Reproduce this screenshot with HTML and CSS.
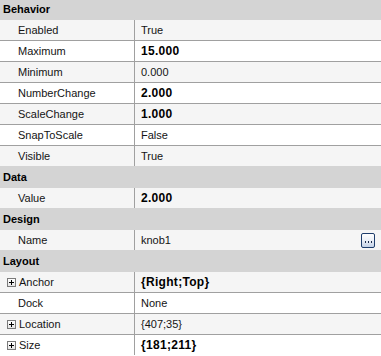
FILE: index.html
```html
<!DOCTYPE html>
<html>
<head>
<meta charset="utf-8">
<link rel="stylesheet" href="styles.css">
</head>
<body>
<div class="grid">
  <div class="cat first">Behavior</div>
  <div class="rows">
    <div class="row light"><div class="name">Enabled</div><div class="val">True</div></div>
    <div class="row"><div class="name">Maximum</div><div class="val bold">15.000</div></div>
    <div class="row light"><div class="name">Minimum</div><div class="val">0.000</div></div>
    <div class="row"><div class="name">NumberChange</div><div class="val bold">2.000</div></div>
    <div class="row light"><div class="name">ScaleChange</div><div class="val bold">1.000</div></div>
    <div class="row"><div class="name">SnapToScale</div><div class="val">False</div></div>
    <div class="row light"><div class="name">Visible</div><div class="val">True</div></div>
  </div>
  <div class="cat">Data</div>
  <div class="rows">
    <div class="row light"><div class="name">Value</div><div class="val bold">2.000</div></div>
  </div>
  <div class="cat">Design</div>
  <div class="rows">
    <div class="row light"><div class="name">Name</div><div class="val">knob1<span class="dots"><i></i><i></i><i></i></span></div></div>
  </div>
  <div class="cat">Layout</div>
  <div class="rows">
    <div class="row light"><div class="name exp"><span class="plus"></span>Anchor</div><div class="val bold">{Right;Top}</div></div>
    <div class="row"><div class="name">Dock</div><div class="val">None</div></div>
    <div class="row light"><div class="name exp"><span class="plus"></span>Location</div><div class="val">{407;35}</div></div>
    <div class="row"><div class="name exp"><span class="plus"></span>Size</div><div class="val bold">{181;211}</div></div>
  </div>
</div>
</body>
</html>
```
FILE: styles.css
```css
html, body {
  margin: 0;
  padding: 0;
  background: #ffffff;
}
body {
  overflow: hidden;
  font-family: "Liberation Sans", Arial, sans-serif;
  font-size: 11px;
  color: #141414;
}
.grid {
  width: 381px;
  display: flex;
  flex-direction: column;
}
.cat {
  height: 22px;
  line-height: 22px;
  background: #d4d4d4;
  font-weight: bold;
  padding-left: 3px;
  color: #000;
}
.cat.first {
  margin-top: -2px;
}
.rows {
  display: flex;
  flex-direction: column;
}
.row {
  display: flex;
  height: 20px;
  line-height: 21px;
  background: #ffffff;
}
.row.light {
  background: #f5f5f5;
}
.row + .row {
  border-top: 1px solid #a0a0a0;
}
.name {
  width: 116px;
  padding-left: 18px;
  border-right: 1px solid #a0a0a0;
  white-space: nowrap;
  display: flex;
  align-items: center;
}
.name.exp {
  padding-left: 7px;
  width: 127px;
}
.plus {
  width: 7px;
  height: 7px;
  border: 1px solid #7a7a7a;
  background: linear-gradient(#ffffff, #e4e4e4);
  margin-right: 3px;
  margin-top: 0px;
  position: relative;
  flex: none;
}
.plus::before {
  content: "";
  position: absolute;
  left: 1px;
  top: 3px;
  width: 5px;
  height: 1px;
  background: #000;
}
.plus::after {
  content: "";
  position: absolute;
  left: 3px;
  top: 1px;
  width: 1px;
  height: 5px;
  background: #000;
}
.val {
  flex: 1;
  padding-left: 6px;
  display: flex;
  align-items: center;
  white-space: nowrap;
}
.val.bold {
  font-weight: bold;
  font-size: 12px;
  letter-spacing: 0.3px;
  color: #000;
}
.dots {
  margin-left: auto;
  margin-right: 6px;
  width: 12px;
  height: 13px;
  border: 1px solid #1f3e6c;
  border-radius: 2px;
  background: linear-gradient(#ffffff 0%, #eef2f8 45%, #c3d1e6 100%);
  display: flex;
  justify-content: center;
  align-items: flex-end;
  gap: 2px;
  padding-bottom: 4px;
  box-sizing: content-box;
  height: 9px;
}
.dots i {
  display: block;
  width: 1px;
  height: 2px;
  background: #1a2a48;
}
```
